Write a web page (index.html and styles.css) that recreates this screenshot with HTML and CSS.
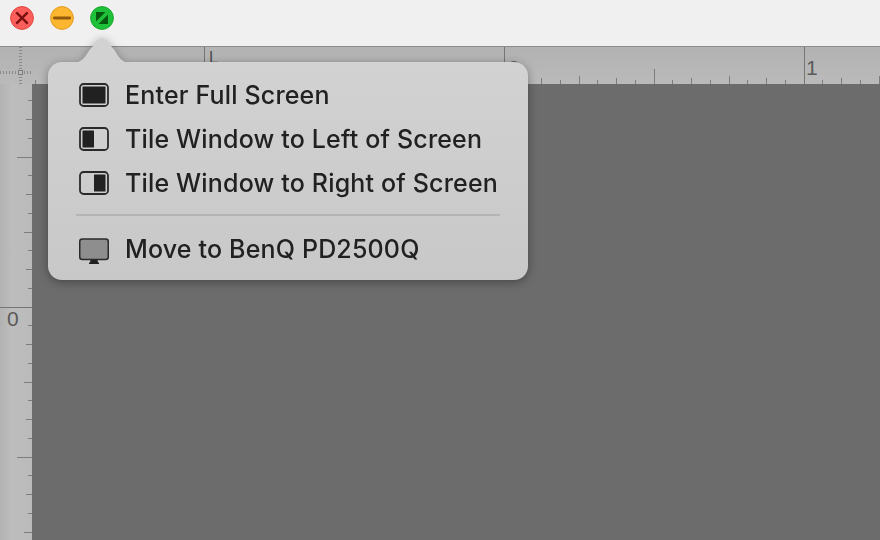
FILE: index.html
```
<!DOCTYPE html>
<html lang="en">
<head>
<meta charset="utf-8">
<title>Window menu</title>
<link rel="stylesheet" href="styles.css">
</head>
<body>
<div class="window">
  <header class="titlebar">
    <svg class="light" viewBox="0 0 24 24"><circle class="red" cx="12" cy="12" r="11.4"/><path class="x" d="M6.300 6.300l11.400 11.400M17.700 6.300L6.300 17.700"/></svg>
    <svg class="light" viewBox="0 0 24 24"><circle class="yellow" cx="12" cy="12" r="11.4"/><path class="minus" d="M4.300 12h15.400"/></svg>
    <svg class="light" viewBox="0 0 24 24"><circle class="green" cx="12" cy="12" r="11.4"/><path class="tri" d="M6 6h9.500L6 15.500zM18 18H8.500L18 8.500z"/></svg>
  </header>
  <div class="top-row">
    <svg class="corner" width="32" height="37" viewBox="0 0 32 37" shape-rendering="crispEdges">
      <path class="dots" d="M20.500 0V37M0 25.500H32"/>
      <rect class="center" x="18.500" y="23.500" width="4" height="4"/>
    </svg>
    <svg class="h-ruler" width="848" height="37" viewBox="0 0 848 37" shape-rendering="crispEdges">
      <defs>
        <pattern id="ht" x="172" y="0" width="300" height="37" patternUnits="userSpaceOnUse">
          <rect class="major" x="0" y="0" width="1" height="37"/>
          <rect class="tick" x="18" y="33" width="1" height="4"/>
          <rect class="tick" x="37" y="31" width="1" height="6"/>
          <rect class="tick" x="56" y="33" width="1" height="4"/>
          <rect class="tick" x="75" y="29" width="1" height="8"/>
          <rect class="tick" x="93" y="33" width="1" height="4"/>
          <rect class="tick" x="112" y="31" width="1" height="6"/>
          <rect class="tick" x="131" y="33" width="1" height="4"/>
          <rect class="tick" x="150" y="22" width="1" height="15"/>
          <rect class="tick" x="168" y="33" width="1" height="4"/>
          <rect class="tick" x="187" y="31" width="1" height="6"/>
          <rect class="tick" x="206" y="33" width="1" height="4"/>
          <rect class="tick" x="225" y="29" width="1" height="8"/>
          <rect class="tick" x="243" y="33" width="1" height="4"/>
          <rect class="tick" x="262" y="31" width="1" height="6"/>
          <rect class="tick" x="281" y="33" width="1" height="4"/>
        </pattern>
      </defs>
      <rect width="848" height="37" fill="url(#ht)"/>
      <text class="digit dark" x="177" y="16">L</text>
      <text class="digit" x="476" y="28">0</text>
      <text class="digit" x="774" y="28">1</text>
    </svg>
  </div>
  <div class="main-row">
    <svg class="v-ruler" width="32" height="456" viewBox="0 0 32 456" shape-rendering="crispEdges">
      <defs>
        <pattern id="vt" x="0" y="-77" width="32" height="300" patternUnits="userSpaceOnUse">
          <rect class="major" x="0" y="0" width="32" height="1"/>
          <rect class="tick" x="28" y="18" width="4" height="1"/>
          <rect class="tick" x="26" y="37" width="6" height="1"/>
          <rect class="tick" x="28" y="56" width="4" height="1"/>
          <rect class="tick" x="24" y="75" width="8" height="1"/>
          <rect class="tick" x="28" y="93" width="4" height="1"/>
          <rect class="tick" x="26" y="112" width="6" height="1"/>
          <rect class="tick" x="28" y="131" width="4" height="1"/>
          <rect class="tick" x="17" y="150" width="15" height="1"/>
          <rect class="tick" x="28" y="168" width="4" height="1"/>
          <rect class="tick" x="26" y="187" width="6" height="1"/>
          <rect class="tick" x="28" y="206" width="4" height="1"/>
          <rect class="tick" x="24" y="225" width="8" height="1"/>
          <rect class="tick" x="28" y="243" width="4" height="1"/>
          <rect class="tick" x="26" y="262" width="6" height="1"/>
          <rect class="tick" x="28" y="281" width="4" height="1"/>
        </pattern>
      </defs>
      <rect width="32" height="456" fill="url(#vt)"/>
      <text class="digit" x="7" y="242">0</text>
    </svg>
    <main class="canvas"></main>
  </div>
</div>

<div class="popover">
  <svg class="arrow" width="60" height="26" viewBox="0 0 60 26"><path d="M0 26C10 25.500 13 18 16.500 13L25 3C27 .5 31 .5 33 3L41.500 13C46 20 48 25.500 58 26z"/></svg>
  <nav class="panel">
    <div class="row">
      <svg class="icon" viewBox="0 0 30 24"><rect class="frame" x="1" y="1" width="28" height="22" rx="3.500"/><rect class="fill" x="3.500" y="3.500" width="23" height="17" rx=".5"/></svg>
      <span>Enter Full Screen</span>
    </div>
    <div class="row">
      <svg class="icon" viewBox="0 0 30 24"><rect class="frame" x="1" y="1" width="28" height="22" rx="3.500"/><rect class="fill" x="3.500" y="3.500" width="11.500" height="17" rx=".5"/></svg>
      <span>Tile Window to Left of Screen</span>
    </div>
    <div class="row">
      <svg class="icon" viewBox="0 0 30 24"><rect class="frame" x="1" y="1" width="28" height="22" rx="3.500"/><rect class="fill" x="15" y="3.500" width="11.500" height="17" rx=".5"/></svg>
      <span>Tile Window to Right of Screen</span>
    </div>
    <hr class="sep">
    <div class="row">
      <svg class="icon monitor" viewBox="0 0 30 26"><rect class="screen" x=".75" y="1" width="28.500" height="20.500" rx="2.500"/><path class="stand" d="M11.500 22h7l.5 2.500h1v2H10v-2h1z"/></svg>
      <span>Move to BenQ PD2500Q</span>
    </div>
  </nav>
</div>
</body>
</html>
```
FILE: styles.css
```
* { box-sizing: border-box; }

html, body {
  margin: 0;
  height: 100%;
  overflow: hidden;
}

body {
  position: relative;
  background: #6c6c6c;
  font-family: Inter, "Liberation Sans", sans-serif;
}

.window {
  display: flex;
  flex-direction: column;
  height: 540px;
}

.titlebar {
  display: flex;
  align-items: center;
  gap: 16px;
  height: 47px;
  padding: 0 0 11px 10px;
  background: #f0f0f0;
  border-bottom: 1px solid #8b8b8b;
  flex: none;
}

.light { width: 24px; height: 24px; display: block; }
.red { fill: #fb5f5b; stroke: #e2453f; stroke-width: 1; }
.yellow { fill: #fcb62f; stroke: #e09c22; stroke-width: 1; }
.green { fill: #1fc13a; stroke: #1aa62f; stroke-width: 1; }
.x { stroke: #7a0f10; stroke-width: 2.400; fill: none; }
.minus { stroke: #94590b; stroke-width: 2.800; fill: none; stroke-linecap: round; }
.tri { fill: #07580f; }

.top-row {
  display: flex;
  height: 37px;
  flex: none;
  background: linear-gradient(#b2b2b2, #bababa);
}

.corner, .h-ruler, .v-ruler { display: block; flex: none; }

.dots {
  fill: none;
  stroke: #8a8a8a;
  stroke-width: 3;
  stroke-dasharray: 1 2;
}
.center { fill: #bdbdbd; stroke: #7d7d7d; stroke-width: 1; }

.tick { fill: #7c7c7c; }
.major { fill: #757575; }

.digit {
  font-family: "Liberation Sans", sans-serif;
  font-size: 21px;
  fill: #5a5a5a;
}
.digit.dark { font-size: 16px; fill: #4c4c4c; }

.main-row {
  display: flex;
  flex: 1;
  min-height: 0;
}

.v-ruler {
  background: linear-gradient(90deg, #b2b2b2, #bdbdbd 12px, #bababa);
}

.canvas {
  flex: 1;
  background: #6c6c6c;
}

.popover {
  position: absolute;
  left: 48px;
  top: 37px;
  width: 480px;
  filter: drop-shadow(0 2px 5px rgba(0, 0, 0, .35));
}

.arrow {
  display: block;
  margin-left: 25px;
  margin-bottom: -1px;
  fill: #d2d2d2;
}

.panel {
  height: 218px;
  padding: 11px 0 0 31px;
  border-radius: 14px;
  background: linear-gradient(#d2d2d2, #c8c8c8);
}

.row {
  display: flex;
  align-items: center;
  gap: 16px;
  height: 44px;
  font-size: 25px;
  font-weight: 450;
  letter-spacing: .17px;
  color: #212121;
  white-space: nowrap;
}

.icon {
  width: 30px;
  height: 24px;
  flex: none;
}
.icon.monitor { height: 26px; margin-top: 3px; }

.frame {
  fill: none;
  stroke: #2a2a2a;
  stroke-width: 1.800;
}
.fill { fill: #212121; }
.screen { fill: #8e8e8e; stroke: #2a2a2a; stroke-width: 1.500; }
.stand { fill: #212121; }

.sep {
  width: 424px;
  height: 2px;
  margin: 9px 0 11px -3px;
  border: 0;
  background: #b4b4b4;
}
```
